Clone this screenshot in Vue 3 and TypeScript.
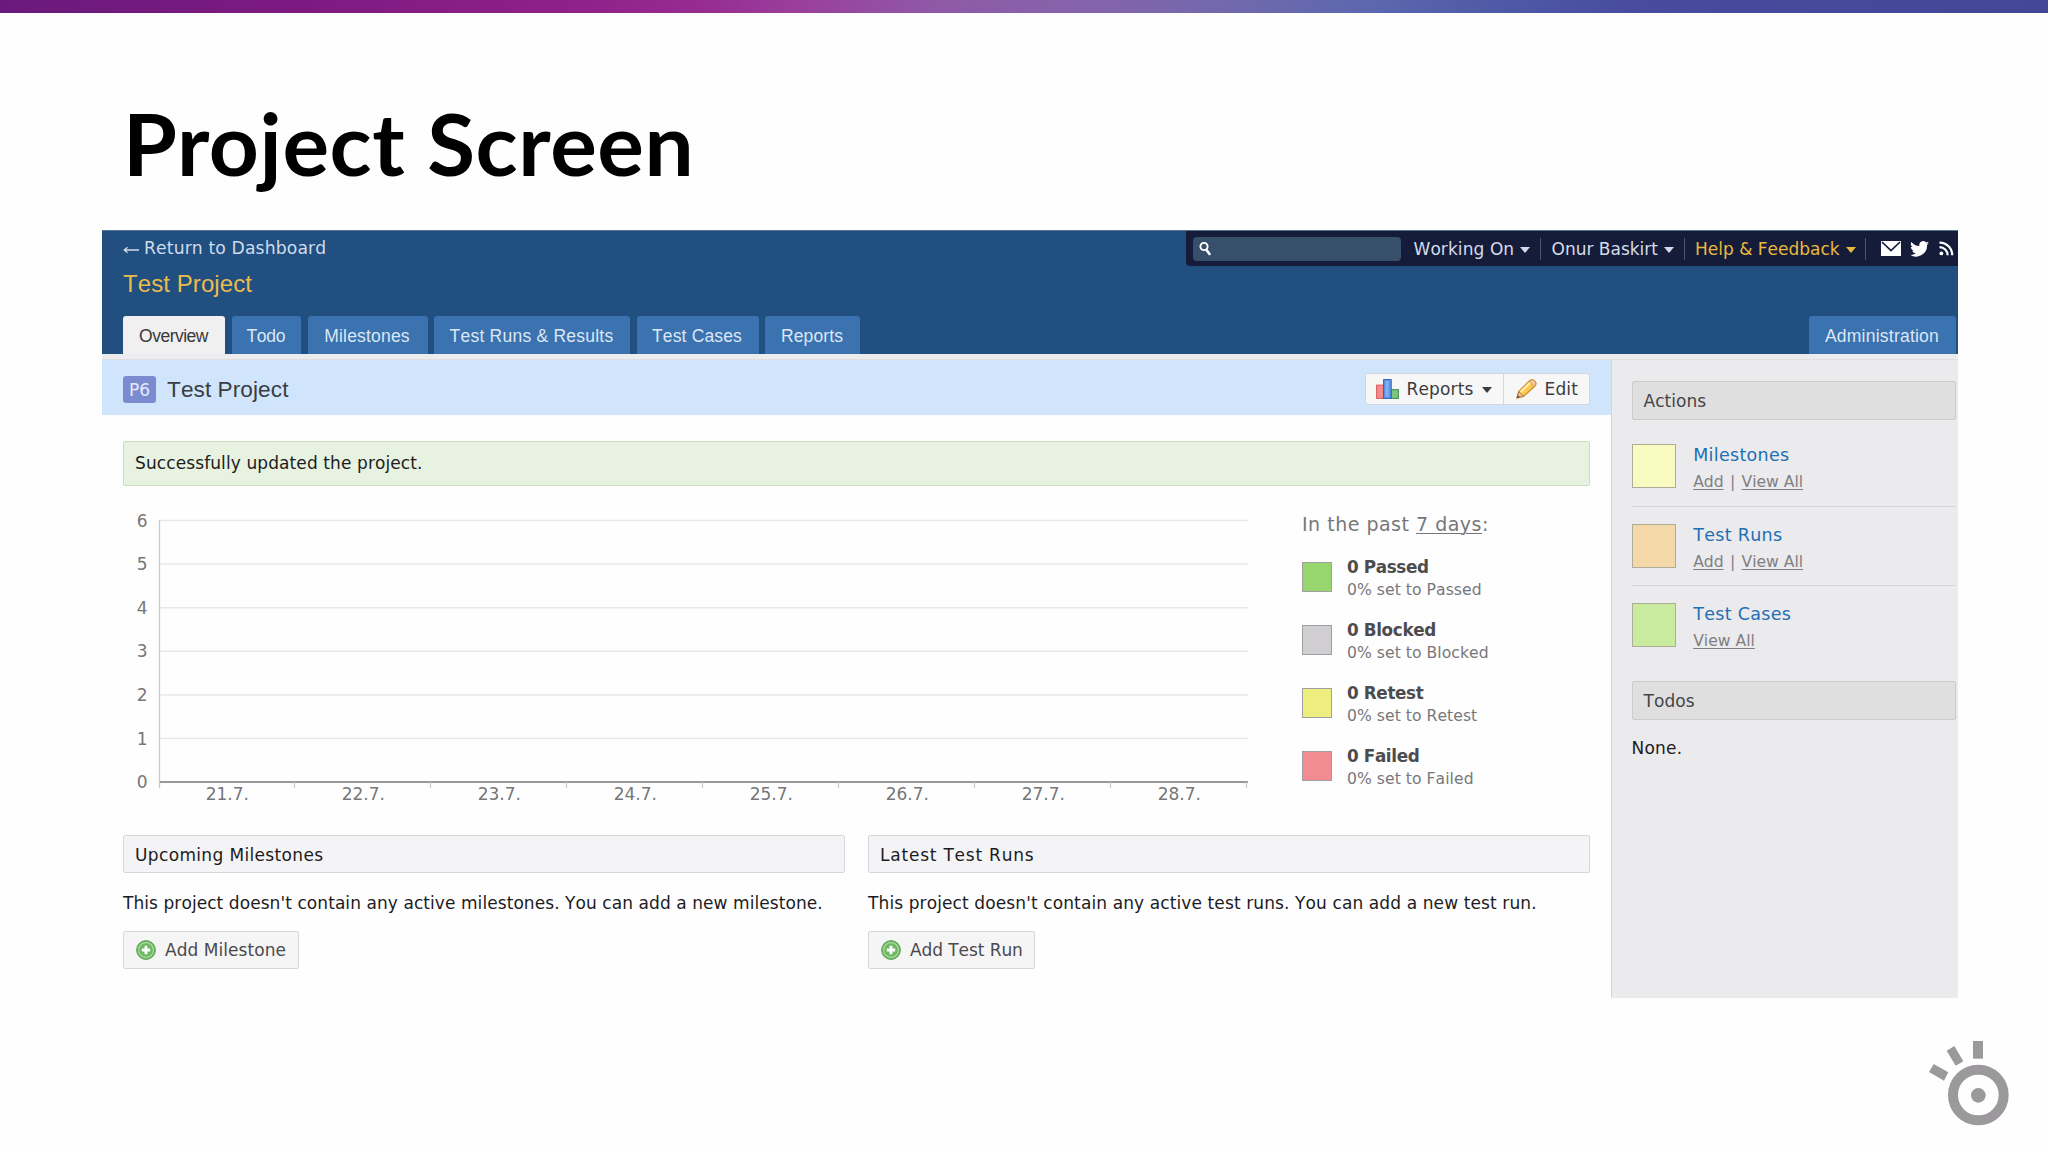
<script setup lang="ts">
interface Tab { label: string; key: string; active?: boolean }
interface Status { name: string; color: string }
interface Action { name: string; color: string; links: string[] }

const tabs: Tab[] = [
  { label: 'Overview', key: 'overview', active: true },
  { label: 'Todo', key: 'todo' },
  { label: 'Milestones', key: 'milestones' },
  { label: 'Test Runs & Results', key: 'runs' },
  { label: 'Test Cases', key: 'cases' },
  { label: 'Reports', key: 'reports' },
]

const menus = [
  { label: 'Working On', key: 'working' },
  { label: 'Onur Baskirt', key: 'user' },
  { label: 'Help & Feedback', key: 'help' },
]

const statuses: Status[] = [
  { name: 'Passed', color: '#97d66e' },
  { name: 'Blocked', color: '#d0ced1' },
  { name: 'Retest', color: '#edee7e' },
  { name: 'Failed', color: '#f28b92' },
]

const actions: Action[] = [
  { name: 'Milestones', color: '#f9fabf', links: ['Add', 'View All'] },
  { name: 'Test Runs', color: '#f5d8a8', links: ['Add', 'View All'] },
  { name: 'Test Cases', color: '#c9eb9f', links: ['View All'] },
]

const panels = [
  {
    title: 'Upcoming Milestones',
    text: "This project doesn't contain any active milestones. You can add a new milestone.",
    button: 'Add Milestone',
  },
  {
    title: 'Latest Test Runs',
    text: "This project doesn't contain any active test runs. You can add a new test run.",
    button: 'Add Test Run',
  },
]

const gridLines = [6, 5, 4, 3, 2, 1, 0].map((value, i) => ({ value, y: 20.5 + i * 43.6 }))
const days = ['21.7.', '22.7.', '23.7.', '24.7.', '25.7.', '26.7.', '27.7.', '28.7.']
const step = 136
</script>

<template>
  <div class="slide">
    <div class="ribbon"></div>
    <h1 class="slide-title"><span>Project Screen</span></h1>

    <div class="app">
      <header class="header">
        <div class="header-left">
          <a class="return"><svg class="arrow" width="17" height="8" viewBox="0 0 17 8"><path d="M1 4H16M4.5 1.2L1.2 4L4.5 6.8" fill="none" stroke="#cfdcec" stroke-width="1.3" /></svg>Return to Dashboard</a>
          <div class="project-name">Test Project</div>
          <nav class="tabs">
            <a v-for="t in tabs" :key="t.key" class="tab" :class="['tab-' + t.key, { active: t.active }]">{{ t.label }}</a>
          </nav>
        </div>
        <div class="header-right">
          <div class="topbar">
            <div class="search">
              <svg width="13" height="16" viewBox="0 0 13 16"><circle cx="5" cy="5.5" r="3.6" fill="none" stroke="#fff" stroke-width="1.9" /><path d="M7.500 9L10.500 13" stroke="#fff" stroke-width="2.6" stroke-linecap="round" /></svg>
            </div>
            <div v-for="m in menus" :key="m.key" class="menu" :class="'menu-' + m.key">
              <span class="menu-label">{{ m.label }}</span><i class="caret"></i>
            </div>
            <svg class="social mail" width="20" height="15" viewBox="0 0 20 15"><path d="M0 0H20V15H0Z" fill="#fff" /><path d="M1 1L10 9.5L19 1" fill="none" stroke="#151c3a" stroke-width="1.7" /></svg>
            <svg class="social bird" width="19" height="16" viewBox="0 0 24 20"><path d="M24 2.4c-.9.4-1.8.7-2.8.8 1-.6 1.800-1.600 2.200-2.700-1 .6-2 1-3.100 1.200A4.900 4.900 0 0 0 11.900 6.200C7.700 6 4.100 4 1.700 1 .4 3.200 1 6.100 3.200 7.600c-.8 0-1.600-.2-2.200-.6 0 2.300 1.600 4.400 3.900 4.900-.7.2-1.500.2-2.200.1.600 2 2.400 3.400 4.600 3.400A9.900 9.900 0 0 1 0 17.400a14 14 0 0 0 21.500-12.500c1-.7 1.800-1.500 2.500-2.500z" fill="#fff" /></svg>
            <svg class="social rss" width="15" height="15" viewBox="0 0 15 15"><circle cx="2.400" cy="12.400" r="1.900" fill="#fff" /><path d="M0.500 6.200A8 8 0 0 1 8.600 14.300M0.500 1.600A12.500 12.500 0 0 1 13.200 14.300" fill="none" stroke="#fff" stroke-width="2.200" /></svg>
          </div>
          <a class="tab tab-admin">Administration</a>
        </div>
      </header>
      <div class="strip"></div>

      <div class="body">
        <main class="main">
          <div class="band">
            <span class="badge">P6</span>
            <span class="band-title">Test Project</span>
            <div class="btn-group">
              <a class="gbtn gbtn-reports">
                <svg width="23" height="20" viewBox="0 0 23 20">
                  <rect x="0.600" y="6.100" width="7" height="13.300" fill="#f58a8a" stroke="#dd5a5e" />
                  <rect x="15.400" y="10.600" width="7" height="8.800" fill="#7cc47f" stroke="#3f9355" />
                  <rect x="7.600" y="0.600" width="7.600" height="18.800" fill="#5f97e6" stroke="#2f61b5" />
                  <path d="M11 2V18" stroke="#82b1f1" stroke-width="3" />
                </svg>
                <span>Reports</span><i class="caret"></i>
              </a>
              <a class="gbtn gbtn-edit">
                <svg width="21" height="20" viewBox="0 0 21 20">
                  <path d="M1 19L2.600 12.600L13.500 1.800Q16 0 18.700 2Q21 4.500 19 7L7.800 17.200Z" fill="#fbc94f" stroke="#cf8a32" stroke-width="1.200" />
                  <path d="M4.800 12.800L14.800 3" stroke="#fff0ae" stroke-width="2.200" />
                  <path d="M13.300 2.200L15.300 0.800Q18 0.200 19.600 2.800Q20.500 5 19 6.800L17.800 7.800Z" fill="#f2c695" stroke="#cf8a32" stroke-width="0.800" />
                  <path d="M1 19L2.700 12.800L7.600 17.200Z" fill="#efc79b" stroke="#b0753a" stroke-width="0.900" />
                  <path d="M1 19L1.700 16.200L4 18.100Z" fill="#584335" />
                </svg>
                <span>Edit</span>
              </a>
            </div>
          </div>

          <div class="content">
            <div class="success">Successfully updated the project.</div>

            <div class="chart-row">
              <svg class="chart" width="1130" height="310" viewBox="0 0 1130 310">
                <g v-for="g in gridLines" :key="g.value">
                  <line v-if="g.value > 0" x1="37" x2="1125" :y1="g.y" :y2="g.y" class="grid" />
                  <text x="24.500" :y="g.y + 6" class="axis-label" text-anchor="end">{{ g.value }}</text>
                </g>
                <line x1="36.500" x2="36.500" y1="20" y2="288" class="axis-y" />
                <line x1="37" x2="1125" y1="282" y2="282" class="axis-x" />
                <line v-for="n in days.length" :key="n" :x1="35.500 + n * step" :x2="35.500 + n * step" y1="282" y2="288" class="axis-y" />
                <text v-for="(d, i) in days" :key="d" :x="104.300 + i * step" y="299.500" class="axis-label" text-anchor="middle">{{ d }}</text>
              </svg>
              <div class="legend">
                <div class="legend-title">In the past <u>7 days</u>:</div>
                <div v-for="s in statuses" :key="s.name" class="status">
                  <i class="swatch" :style="{ background: s.color }"></i>
                  <div>
                    <div class="status-name">0 {{ s.name }}</div>
                    <div class="status-sub">0% set to {{ s.name }}</div>
                  </div>
                </div>
              </div>
            </div>

            <div class="panels">
              <section v-for="p in panels" :key="p.title" class="panel">
                <h2 class="box-head">{{ p.title }}</h2>
                <p class="panel-text">{{ p.text }}</p>
                <a class="add-btn">
                  <svg width="20" height="20" viewBox="0 0 20 20">
                    <circle cx="10" cy="10" r="9.400" fill="#6fb665" stroke="#5ca453" />
                    <circle cx="10" cy="10" r="7.400" fill="none" stroke="#a9d89f" stroke-width="1.200" />
                    <path d="M10 5.800V14.200M5.800 10H14.200" stroke="#fff" stroke-width="2.800" />
                  </svg>
                  <span>{{ p.button }}</span>
                </a>
              </section>
            </div>
          </div>
        </main>

        <aside class="sidebar">
          <h2 class="box-head dark">Actions</h2>
          <div class="actions">
            <div v-for="a in actions" :key="a.name" class="action">
              <i class="action-icon" :style="{ background: a.color }"></i>
              <div>
                <div class="action-name">{{ a.name }}</div>
                <div class="action-links">
                  <template v-for="(l, i) in a.links" :key="l"><span v-if="i > 0" class="bar">|</span><u>{{ l }}</u></template>
                </div>
              </div>
            </div>
          </div>
          <h2 class="box-head dark">Todos</h2>
          <p class="none">None.</p>
        </aside>
      </div>
    </div>

    <footer class="footer">
      <svg width="140" height="120" viewBox="0 0 420 360" fill="#9b999b">
        <circle cx="235" cy="225" r="76" fill="none" stroke="#9b999b" stroke-width="30" />
        <circle cx="235" cy="226" r="22" />
        <path d="M219 63H249V116H219Z" />
        <path d="M140 92L163 78L190 124L167 137Z" />
        <path d="M101 132L145 157L132 182L87 156Z" />
      </svg>
    </footer>
  </div>
</template>

<style>
body { margin: 0; background: #fefefe; }
</style>

<style scoped>
* { box-sizing: border-box; }
h1, h2, p { margin: 0; font-weight: normal; }
svg { display: block; flex: none; }
.slide {
  width: 2048px; height: 1152px; overflow: hidden;
  display: flex; flex-direction: column;
  background: #fefefe; color: #1c1c1e;
  font-family: "DejaVu Sans", sans-serif; font-size: 17px;
  font-kerning: none; white-space: nowrap;
}
.ribbon {
  height: 13px; flex: none;
  background: linear-gradient(90deg, #6a1a7c 0%, #7d1a82 15%, #8e2089 27%, #962b90 34%, #9a3f9c 39%, #8f5aa8 46%, #8563ab 53%, #7269ad 60%, #5b67ae 67%, #4e5aa5 73%, #484b9e 80%, #434795 100%);
}
.slide-title {
  height: 217px; flex: none; padding: 75.500px 0 0 122.500px;
  font-family: Lato, sans-serif; font-weight: 700; font-size: 86px; line-height: 108px; color: #000;
  font-kerning: normal; letter-spacing: 0.600px;
}
.slide-title span { display: inline-block; transform: scaleX(1.015); transform-origin: 0 50%; }

.app { width: 1856px; height: 768px; margin-left: 102px; flex: none; }
.header { display: flex; justify-content: space-between; height: 124px; background: #204f80; border-top: 1px solid #55728f; }
.header-left { padding-left: 21px; }
.return { display: flex; align-items: center; height: 35px; padding-bottom: 2px; font-size: 17.2px; letter-spacing: 0.130px; color: #cfdcec; }
.arrow { margin: 4px 4px 0 0; }
.project-name { height: 36px; line-height: 36px; font-family: "Liberation Sans", sans-serif; font-size: 24px; color: #ecbb4e; letter-spacing: 0.080px; }
.tabs { display: flex; gap: 6.500px; margin-top: 13.500px; }
.tab {
  height: 38.500px; padding-right: 1px; line-height: 40px; text-align: center; border-radius: 3px 3px 0 0;
  background: #3b72b0; color: #dbe7f5; font-family: "Liberation Sans", sans-serif; font-size: 17.500px;
}
.tab.active { background: #f1f0f1; color: #38383a; }
.tab-overview { width: 102px; letter-spacing: -0.500px; }
.tab-todo { width: 69.500px; letter-spacing: -0.300px; }
.tab-milestones { width: 120px; letter-spacing: 0.200px; }
.tab-runs { width: 196px; letter-spacing: 0.230px; }
.tab-cases { width: 122px; letter-spacing: 0.150px; }
.tab-reports { width: 95px; letter-spacing: 0.100px; }
.tab-admin { width: 147px; margin-right: 2px; letter-spacing: 0.230px; }

.header-right { display: flex; flex-direction: column; justify-content: space-between; align-items: flex-end; }
.topbar { display: flex; align-items: center; width: 772px; height: 35px; padding-left: 7px; background: #151c3a; border-radius: 0 0 0 4px; }
.search { width: 208px; height: 24px; margin-right: 2px; padding: 4px 6px; border-radius: 4px; background: #374f6b; }
.menu { display: flex; align-items: center; height: 22px; padding-left: 10.500px; border-right: 1px solid #4a5373; color: #d6dbea; }
.menu-label { padding-top: 1px; }
.menu-working { width: 138px; letter-spacing: 0.080px; }
.menu-user { width: 143.500px; }
.menu-help { width: 181px; color: #e8b93f; }
.caret { width: 0; height: 0; margin: 2px 0 0 6px; border: 5.500px solid transparent; border-top: 6px solid currentColor; border-bottom: 0; }
.mail { margin-left: 15px; }
.bird { margin-left: 9.500px; }
.rss { margin-left: 10px; }

.strip { height: 6px; background: #ececee; border-bottom: 1px solid #dddfe2; }
.body { display: flex; height: 638px; }
.main { width: 1509px; }
.band { display: flex; align-items: center; height: 55px; padding: 3px 21px 0; background: #d0e5fb; }
.badge { width: 33px; height: 27px; line-height: 28px; text-align: center; border-radius: 3px; background: #7a8bd0; color: #e6ebfa; }
.band-title { margin: 2px 0 0 11px; font-family: "Liberation Sans", sans-serif; font-size: 22.600px; color: #3a3d44; letter-spacing: 0.080px; }
.btn-group { display: flex; width: 225px; height: 32px; margin: -1px 0 0 auto; border: 1px solid #d4d7dc; border-radius: 3px; background: #f7f7f8; color: #3c3c3f; }
.gbtn { display: flex; align-items: center; letter-spacing: 0.150px; }
.gbtn-reports { width: 138px; padding-left: 10px; border-right: 1px solid #d6d6d9; }
.gbtn-edit { padding-left: 12px; }
.gbtn span { margin-left: 7.500px; }
.gbtn .caret { margin-left: 8px; }

.content { padding: 26px 21px 0; }
.success { height: 45px; line-height: 42px; padding-left: 11px; border: 1px solid #c9dfbd; border-radius: 2px; background: #e7f2e0; letter-spacing: 0.100px; }
.chart-row { display: flex; height: 349px; padding-top: 14px; }
.grid { stroke: #e9e7ed; stroke-width: 1.500; }
.axis-y { stroke: #c9c8cd; stroke-width: 1.300; }
.axis-x { stroke: #98979b; stroke-width: 2; }
.axis-label { fill: #767678; font-size: 17px; }
.legend { margin-left: 49px; color: #77777a; }
.legend-title { margin-top: 13px; height: 22px; line-height: 22px; font-size: 19px; letter-spacing: 0.500px; }
u { text-underline-offset: 2px; text-decoration-thickness: 1px; }
.status { display: flex; height: 63px; padding-top: 27px; }
.swatch { width: 30px; height: 30px; margin-right: 15px; border: 1px solid #a09fa2; }
.status > div { margin-top: -6px; }
.status-name { height: 23px; line-height: 22px; font-weight: bold; font-size: 16.800px; letter-spacing: -0.360px; color: #4c4c4f; }
.status-sub { height: 22px; line-height: 22px; font-size: 15.600px; letter-spacing: 0.050px; }

.panels { display: flex; justify-content: space-between; }
.panel { width: 722px; }
.box-head { height: 38px; line-height: 38px; padding-left: 11px; border: 1px solid #d8d6da; border-radius: 2px; background: #f4f3f5; font-size: 17px; letter-spacing: 0.350px; }
.panel:last-child .box-head { letter-spacing: 0.780px; }
.panel-text { height: 58px; padding-top: 1px; line-height: 58px; letter-spacing: 0.070px; }
.panel:last-child .panel-text { letter-spacing: 0.110px; }
.add-btn { display: inline-flex; align-items: center; height: 38px; padding: 0 12px; border: 1px solid #d8d7da; border-radius: 2px; background: #f5f5f6; color: #4a4a4d; letter-spacing: 0.050px; }
.panel:last-child .add-btn { padding-right: 11px; letter-spacing: -0.080px; }
.add-btn span { margin-left: 9px; }

.sidebar { width: 347px; padding: 21px 2px 0 19.500px; border-left: 1px solid #d6d5d8; background: #ebeaec; }
.box-head.dark { height: 39px; background: #dfdfe0; border-color: #cbcacd; color: #454548; letter-spacing: 0.050px; }
.action { display: flex; height: 79.500px; padding-top: 17px; border-bottom: 1px solid #d6d5d8; }
.action:last-child { border-bottom: 0; }
.actions { height: 261px; padding-top: 7px; }
.action-icon { width: 44px; height: 44px; margin-right: 17.700px; border: 1px solid #aeae98; }
.action > div { margin-top: -2px; }
.action-name { height: 27px; line-height: 26px; font-size: 17.500px; color: #2170b4; letter-spacing: 0.300px; }
.action-links { height: 26px; line-height: 26px; font-size: 15.600px; color: #808083; }
.bar { margin: 0 6.300px; }
.none { margin-top: 17px; line-height: 22px; letter-spacing: 0.200px; }

.footer { display: flex; flex: none; height: 132px; padding: 22px 8px 0 0; justify-content: flex-end; }
</style>
